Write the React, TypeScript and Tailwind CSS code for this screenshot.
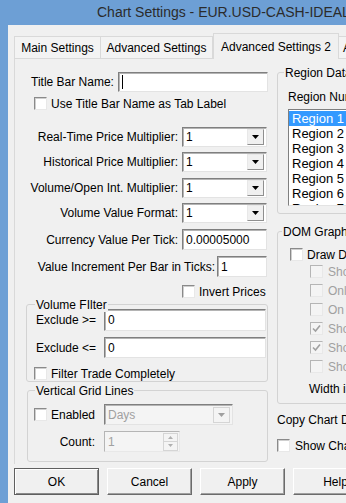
import React from "react";

const Arrow = ({ disabled }: { disabled?: boolean }) => (
  <svg width="7" height="4" viewBox="0 0 7 4">
    <polygon points="0,0 7,0 3.5,4" fill={disabled ? "#a0a0a0" : "#000"} />
  </svg>
);

const Check = ({ checked, disabled }: { checked?: boolean; disabled?: boolean }) => (
  <span
    className={
      disabled
        ? "w-[13px] h-[13px] shrink-0 inline-flex items-center justify-center border border-t-[#b5b5b5] border-l-[#b5b5b5] border-r-[#e8e8e8] border-b-[#e8e8e8] bg-[#f4f4f4]"
        : "w-[13px] h-[13px] shrink-0 inline-flex items-center justify-center border border-t-[#8a8a8a] border-l-[#8a8a8a] border-r-[#e8e8e8] border-b-[#e8e8e8] bg-white shadow-[inset_1px_1px_0_#cfcfcf]"
    }
  >
    {checked && (
      <svg width="9" height="9" viewBox="0 0 9 9">
        <polyline points="1,4.5 3.5,7 8,1.5" fill="none" stroke={disabled ? "#a0a0a0" : "#000"} strokeWidth="1.6" />
      </svg>
    )}
  </span>
);

const TextBox = ({ value, className, caret }: { value?: string; className: string; caret?: boolean }) => (
  <div
    className={`${className} shrink-0 bg-white border border-t-[#7f7f7f] border-l-[#7f7f7f] border-r-[#e3e3e3] border-b-[#e3e3e3] shadow-[inset_1px_1px_0_#b4b4b4] flex items-center pl-[3px]`}
  >
    {caret && <span className="w-[1px] h-[14px] bg-black" />}
    {value}
  </div>
);

const Combo = ({ value, className, disabled }: { value: string; className: string; disabled?: boolean }) => (
  <div
    className={`${className} shrink-0 border border-t-[#7f7f7f] border-l-[#7f7f7f] border-r-[#e3e3e3] border-b-[#e3e3e3] shadow-[inset_1px_1px_0_#b4b4b4] flex items-center pl-[3px] pr-[2px] ${
      disabled ? "bg-[#f4f4f4] text-[#a0a0a0]" : "bg-white"
    }`}
  >
    <span className="flex-1">{value}</span>
    <span
      className={`w-[17px] h-[16px] flex items-center justify-center border ${
        disabled ? "border-[#d5d5d5] bg-[#f4f4f4]" : "border-t-[#e8e8e8] border-l-[#e8e8e8] border-r-[#8f8f8f] border-b-[#8f8f8f] bg-[#f0f0f0]"
      }`}
    >
      <Arrow disabled={disabled} />
    </span>
  </div>
);

const Group = ({
  title,
  className,
  legendLeft,
  children,
}: {
  title: string;
  className: string;
  legendLeft: string;
  children?: React.ReactNode;
}) => (
  <div className={`${className} relative shrink-0 border border-[#d3d3d3] rounded-[3px] flex flex-col`}>
    <span className={`absolute ${legendLeft} top-[-7px] px-[1px] leading-[14px] bg-[#f0f0f0]`}>{title}</span>
    {children}
  </div>
);

const Button = ({ label, primary }: { label: string; primary?: boolean }) => (
  <button
    className={
      primary
        ? "w-[85px] h-[27px] shrink-0 border border-[#5f5f5f] bg-[#f0f0f0] shadow-[inset_1px_1px_0_#ffffff,inset_-1px_-1px_0_#8a8a8a]"
        : "w-[85px] h-[27px] shrink-0 border border-t-white border-l-white border-r-[#6b6b6b] border-b-[#6b6b6b] bg-[#f0f0f0] shadow-[inset_-1px_-1px_0_#a0a0a0]"
    }
  >
    {label}
  </button>
);

const LabeledCombo = ({ label, value }: { label: string; value: string }) => (
  <div className="h-[20px] flex items-center">
    <span className="w-[163px] text-right whitespace-nowrap">{label}</span>
    <Combo value={value} className="ml-[4px] w-[85px] h-[20px]" />
  </div>
);

const regions = ["Region 1", "Region 2", "Region 3", "Region 4", "Region 5", "Region 6", "Region 7"];

const domOptions = [
  { label: "Show Bid/Ask Sizes", checked: false },
  { label: "Only Inside Market", checked: false },
  { label: "On Right Side", checked: false },
  { label: "Show Volume Bars", checked: true },
  { label: "Show Price Labels", checked: true },
  { label: "Show Totals", checked: false },
];

export default function App() {
  return (
    <div className="w-[346px] h-[503px] overflow-hidden bg-[#6d9fd5] font-['Liberation_Sans',Arial,sans-serif] text-[12px] text-black">
      <div className="w-[480px] h-full flex flex-col">
        {/* title bar */}
        <div className="h-[25px] shrink-0 pl-[97px] flex items-center text-[14px] text-[#2b2b2b] whitespace-nowrap">
          Chart Settings - EUR.USD-CASH-IDEALPRO
        </div>

        <div className="flex-1 ml-[8px] bg-[#f0f0f0] flex flex-col pl-[6px]">
          {/* tabs */}
          <div className="mt-[8px] h-[25px] flex items-end">
            <div className="w-[87px] h-[22px] border border-b-0 border-[#d9d9d9] bg-[#f3f3f3] flex items-center justify-center whitespace-nowrap">
              Main Settings
            </div>
            <div className="w-[112px] h-[22px] border border-l-0 border-b-0 border-[#d9d9d9] bg-[#f3f3f3] flex items-center justify-center whitespace-nowrap">
              Advanced Settings
            </div>
            <div className="relative z-10 w-[126px] h-[26px] -mb-[1px] border border-b-0 border-[#d9d9d9] bg-[#f0f0f0] flex items-center justify-center whitespace-nowrap">
              Advanced Settings 2
            </div>
            <div className="w-[120px] h-[22px] border border-l-0 border-b-0 border-[#d9d9d9] bg-[#f3f3f3] flex items-center pl-[4px] whitespace-nowrap">
              Alerts
            </div>
          </div>

          {/* panel */}
          <div className="h-[406px] shrink-0 border-l border-t border-[#d9d9d9] flex">
            {/* left column */}
            <div className="w-[253px] shrink-0 flex flex-col">
              <div className="mt-[13px] h-[20px] flex items-center">
                <span className="w-[103px] pl-[16px] whitespace-nowrap">Title Bar Name:</span>
                <TextBox className="w-[150px] h-[20px]" caret />
              </div>
              <div className="mt-[5px] h-[13px] flex items-center pl-[19px]">
                <Check />
                <span className="ml-[4px] whitespace-nowrap">Use Title Bar Name as Tab Label</span>
              </div>
              <div className="mt-[17px]">
                <LabeledCombo label="Real-Time Price Multiplier:" value="1" />
              </div>
              <div className="mt-[5px]">
                <LabeledCombo label="Historical Price Multiplier:" value="1" />
              </div>
              <div className="mt-[6px]">
                <LabeledCombo label="Volume/Open Int. Multiplier:" value="1" />
              </div>
              <div className="mt-[5px]">
                <LabeledCombo label="Volume Value Format:" value="1" />
              </div>
              <div className="mt-[6px] h-[21px] flex items-center">
                <span className="w-[163px] text-right whitespace-nowrap">Currency Value Per Tick:</span>
                <TextBox value="0.00005000" className="ml-[4px] w-[85px] h-[21px]" />
              </div>
              <div className="mt-[6px] h-[21px] flex items-center">
                <span className="w-[200px] text-right whitespace-nowrap">Value Increment Per Bar in Ticks:</span>
                <TextBox value="1" className="ml-[2px] w-[50px] h-[21px]" />
              </div>
              <div className="mt-[8px] h-[13px] flex items-center pl-[167px]">
                <Check />
                <span className="ml-[4px] whitespace-nowrap">Invert Prices</span>
              </div>

              <Group title="Volume FIlter" legendLeft="left-[8px]" className="mt-[6px] ml-[11px] w-[242px] h-[78px]">
                <div className="mt-[4px] h-[22px] flex items-center pl-[9px]">
                  <span className="w-[68px] whitespace-nowrap">Exclude &gt;=</span>
                  <TextBox value="0" className="w-[162px] h-[22px]" />
                </div>
                <div className="mt-[6px] h-[21px] flex items-center pl-[9px]">
                  <span className="w-[68px] whitespace-nowrap">Exclude &lt;=</span>
                  <TextBox value="0" className="w-[162px] h-[21px]" />
                </div>
                <div className="mt-[9px] h-[13px] flex items-center pl-[7px]">
                  <Check />
                  <span className="ml-[4px] whitespace-nowrap">Filter Trade Completely</span>
                </div>
              </Group>

              <Group title="Vertical Grid Lines" legendLeft="left-[7px]" className="mt-[8px] ml-[12px] w-[241px] h-[72px]">
                <div className="mt-[13px] h-[21px] flex items-center">
                  <span className="w-[76px] pl-[6px] flex items-center">
                    <Check />
                    <span className="ml-[4px]">Enabled</span>
                  </span>
                  <Combo value="Days" disabled className="w-[129px] h-[21px]" />
                </div>
                <div className="mt-[6px] h-[21px] flex items-center">
                  <span className="w-[67px] text-right">Count:</span>
                  <div className="ml-[9px] w-[76px] h-[21px] border border-t-[#b5b5b5] border-l-[#b5b5b5] border-r-[#e8e8e8] border-b-[#e8e8e8] bg-[#f4f4f4] flex items-center pl-[3px] pr-[1px] text-[#a0a0a0]">
                    <span className="flex-1">1</span>
                    <span className="w-[15px] h-[18px] flex flex-col">
                      <span className="h-[9px] border border-[#d5d5d5] flex items-center justify-center">
                        <svg width="5" height="3" viewBox="0 0 5 3">
                          <polygon points="0,3 5,3 2.5,0" fill="#b0b0b0" />
                        </svg>
                      </span>
                      <span className="h-[9px] border border-t-0 border-[#d5d5d5] flex items-center justify-center">
                        <svg width="5" height="3" viewBox="0 0 5 3">
                          <polygon points="0,0 5,0 2.5,3" fill="#b0b0b0" />
                        </svg>
                      </span>
                    </span>
                  </div>
                </div>
              </Group>
            </div>

            {/* right column */}
            <div className="ml-[9px] w-[190px] shrink-0 flex flex-col">
              <Group title="Region Data" legendLeft="left-[6px]" className="mt-[13px] w-[180px] h-[142px]">
                <span className="mt-[17px] h-[14px] leading-[14px] pl-[10px] whitespace-nowrap">Region Number:</span>
                <div className="mt-[5px] ml-[10px] w-[150px] h-[97px] overflow-hidden bg-white border border-t-[#7f7f7f] border-l-[#7f7f7f] border-r-[#e3e3e3] border-b-[#e3e3e3] pt-[1px] text-[13px]">
                  {regions.map((r, i) => (
                    <div
                      key={r}
                      className={i === 0 ? "h-[15px] leading-[15px] pl-[3px] bg-[#3399ff] text-white" : "h-[15px] leading-[15px] pl-[3px]"}
                    >
                      {r}
                    </div>
                  ))}
                </div>
              </Group>

              <Group title="DOM Graphics" legendLeft="left-[4px]" className="mt-[17px] w-[180px] h-[173px]">
                <div className="mt-[16px] h-[13px] flex items-center pl-[12px]">
                  <Check />
                  <span className="ml-[4px] whitespace-nowrap">Draw DOM Graphics</span>
                </div>
                {domOptions.map((o, i) => (
                  <div
                    key={o.label}
                    className={i === 0 ? "mt-[4px] h-[13px] flex items-center pl-[32px] text-[#a0a0a0]" : "mt-[6px] h-[13px] flex items-center pl-[32px] text-[#a0a0a0]"}
                  >
                    <Check disabled checked={o.checked} />
                    <span className="ml-[5px] whitespace-nowrap">{o.label}</span>
                  </div>
                ))}
                <span className="mt-[9px] h-[14px] leading-[14px] pl-[31px] whitespace-nowrap">Width in Pixels:</span>
              </Group>

              <span className="mt-[9px] h-[14px] leading-[14px] whitespace-nowrap">Copy Chart Data to Clipboard</span>
              <div className="mt-[12px] h-[13px] flex items-center">
                <Check />
                <span className="ml-[5px] whitespace-nowrap">Show Chart Values</span>
              </div>
            </div>
          </div>

          {/* buttons */}
          <div className="mt-[4px] flex gap-[8px]">
            <Button label="OK" primary />
            <Button label="Cancel" />
            <Button label="Apply" />
            <Button label="Help" />
          </div>
        </div>
      </div>
    </div>
  );
}
